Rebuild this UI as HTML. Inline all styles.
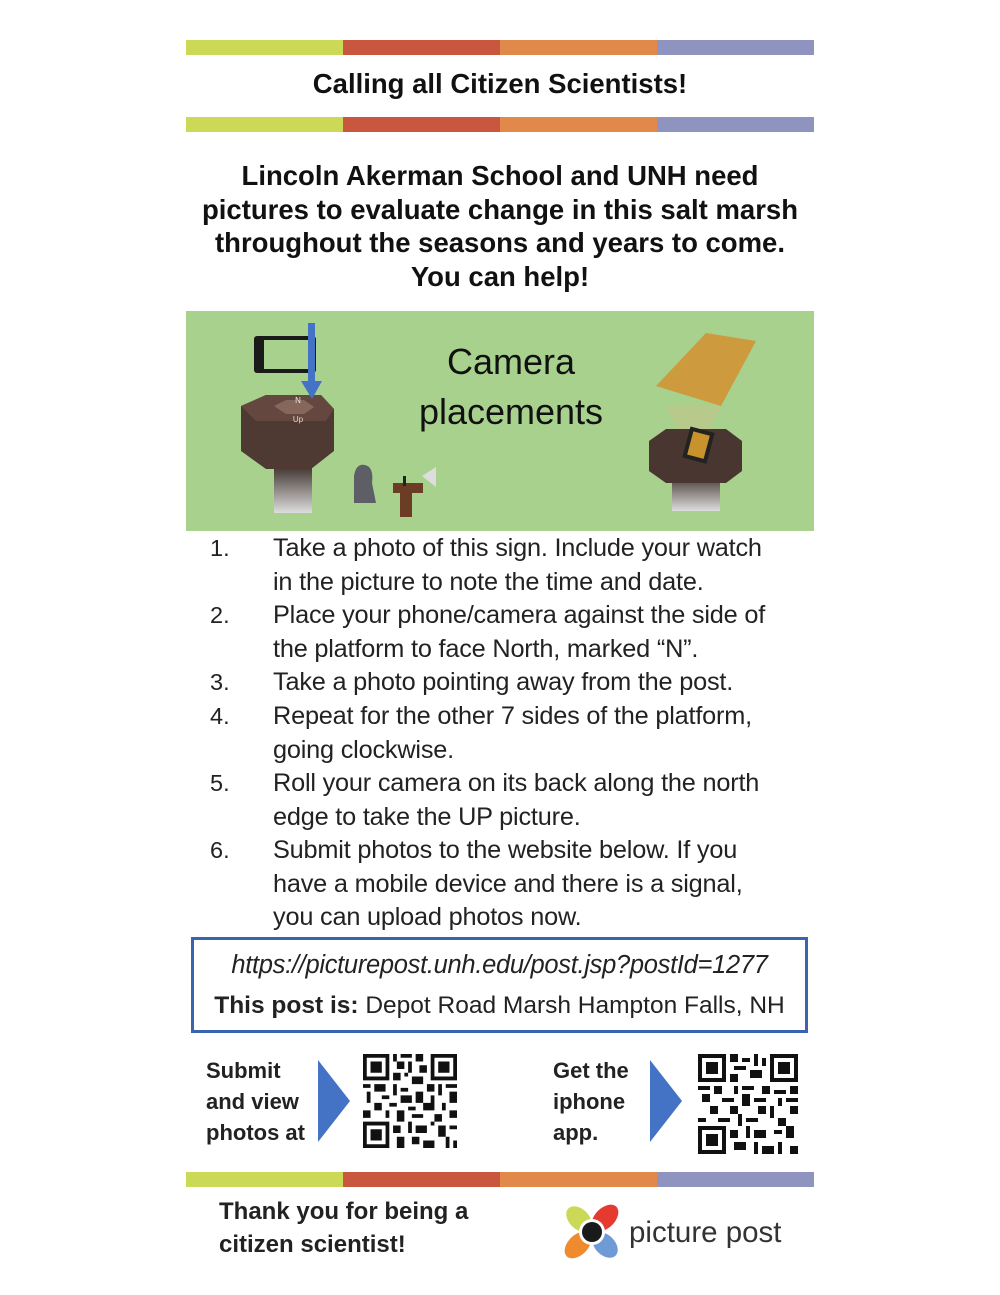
<!DOCTYPE html>
<html><head><meta charset="utf-8"><style>
body{margin:0;background:#fff;width:1000px;height:1295px;position:relative;font-family:"Liberation Sans",sans-serif;color:#111;overflow:hidden}
.stripe{position:absolute;left:186px;width:628px;height:15px;display:flex}
.stripe div{flex:1}
.a{background:#ccd957}.b{background:#c9573f}.c{background:#e0894a}.d{background:#8e93bf}
.abs{position:absolute}
.li{position:absolute;left:210px;font-size:23.5px;line-height:33.5px;color:#222}
.li span{position:absolute;left:63px;white-space:nowrap;font-size:25.3px;letter-spacing:-0.2px}
</style></head><body>
<div class="stripe" style="top:40px"><div class="a"></div><div class="b"></div><div class="c"></div><div class="d"></div></div>
<div class="abs" style="top:68px;left:0;width:1000px;text-align:center;font-weight:bold;font-size:27.5px">Calling all Citizen Scientists!</div>
<div class="stripe" style="top:117px"><div class="a"></div><div class="b"></div><div class="c"></div><div class="d"></div></div>
<div class="abs" style="top:159px;left:0;width:1000px;text-align:center;font-weight:bold;font-size:27.5px;line-height:33.5px">Lincoln Akerman School and UNH need<br>pictures to evaluate change in this salt marsh<br>throughout the seasons and years to come.<br>You can help!</div>

<div class="abs" style="left:186px;top:311px;width:628px;height:220px;background:#a8d18e;overflow:hidden">
<svg width="628" height="220" viewBox="0 0 628 220">
<defs><linearGradient id="g1" x1="0" y1="0" x2="0" y2="1"><stop offset="0" stop-color="#2e211c"/><stop offset="1" stop-color="#ddd"/></linearGradient></defs>
<rect x="88" y="150" width="38" height="52" fill="url(#g1)"/>
<polygon points="55,95 80,84 135,84 148,98 148,140 125,158 80,158 55,140" fill="#4f3a33"/>
<polygon points="55,95 80,84 135,84 148,98 140,110 70,110" fill="#64483f"/>
<polygon points="88,95 100,89 118,89 128,96 118,103 100,103" fill="#86675c"/>
<text x="112" y="111" font-size="8" fill="#ddd" text-anchor="middle">Up</text>
<text x="112" y="92" font-size="8" fill="#eee" text-anchor="middle">N</text>
<rect x="68" y="25" width="62" height="37" rx="3" fill="#1a1a1a"/><rect x="78" y="29" width="48" height="29" fill="#a8d18e"/>
<rect x="122" y="12" width="7" height="60" fill="#4472c4"/><polygon points="115,70 136,70 126,88" fill="#4472c4"/>
<path d="M168,192 L168,165 Q170,152 179,154 Q188,156 186,172 L190,192 Z" fill="#5e5e66"/>
<rect x="207" y="172" width="30" height="10" fill="#6b3d24"/><rect x="214" y="180" width="12" height="26" fill="#6b3d24"/>
<rect x="217" y="165" width="3" height="10" fill="#222"/>
<polygon points="236,165 250,156 250,176" fill="#ddd"/>
<polygon points="470,75 520,22 570,30 535,95" fill="#cd9a3d"/>
<polygon points="480,95 535,95 520,125 495,125" fill="#bfc78a" opacity=".7"/>
<rect x="486" y="160" width="48" height="40" fill="url(#g1)"/>
<polygon points="463,130 480,118 540,118 556,130 556,160 540,172 480,172 463,160" fill="#4a3630"/>
<rect x="500" y="118" width="25" height="32" fill="#222" transform="rotate(15 512 134)"/><rect x="504" y="122" width="17" height="24" fill="#c8922c" transform="rotate(15 512 134)"/>
</svg>
<div class="abs" style="left:210px;top:26px;width:230px;text-align:center;font-size:36px;line-height:50px;color:#111">Camera<br>placements</div>
</div>

<div class="li" style="top:532px">1.<span>Take a photo of this sign. Include your watch<br>in the picture to note the time and date.</span></div>
<div class="li" style="top:599px">2.<span>Place your phone/camera against the side of<br>the platform to face North, marked “N”.</span></div>
<div class="li" style="top:666px">3.<span>Take a photo pointing away from the post.</span></div>
<div class="li" style="top:700px">4.<span>Repeat for the other 7 sides of the platform,<br>going clockwise.</span></div>
<div class="li" style="top:767px">5.<span>Roll your camera on its back along the north<br>edge to take the UP picture.</span></div>
<div class="li" style="top:834px">6.<span>Submit photos to the website below. If you<br>have a mobile device and there is a signal,<br>you can upload photos now.</span></div>

<div class="abs" style="left:191px;top:937px;width:611px;height:90px;border:3px solid #3a63b0;text-align:center;color:#222">
<div style="margin-top:11px;font-style:italic;font-size:25.5px;letter-spacing:-0.3px">https://picturepost.unh.edu/post.jsp?postId=1277</div>
<div style="margin-top:12px;font-size:24.5px"><b>This post is:</b> Depot Road Marsh Hampton Falls, NH</div></div>

<div class="abs" style="left:206px;top:1055px;font-size:22px;line-height:31px;font-weight:bold;color:#222">Submit<br>and view<br>photos at</div>
<svg class="abs" style="left:316px;top:1060px" width="36" height="82"><polygon points="2,0 34,41 2,82" fill="#4472c4"/></svg>
<div class="abs" style="left:553px;top:1055px;font-size:22px;line-height:31px;font-weight:bold;color:#222">Get the<br>iphone<br>app.</div>
<svg class="abs" style="left:648px;top:1060px" width="36" height="82"><polygon points="2,0 34,41 2,82" fill="#4472c4"/></svg>

<svg class="abs" style="left:362px;top:1054px" width="96" height="94" viewBox="0 0 25 25">
<g fill="#111"><path d="M0 0h7v7H0zM1 1v5h5V1zM2 2h3v3H2zM18 0h7v7h-7zM19 1v5h5V1zM20 2h3v3h-3zM0 18h7v7H0zM1 19v5h5v-5zM2 20h3v3H2z" fill-rule="evenodd"/>
<path d="M8 0h1v2H8zM10 0h3v1h-3zM14 0h2v2h-2zM9 2h2v2H9zM12 2h1v3h-1zM15 3h2v2h-2zM8 5h2v2H8zM11 5h1v1h-1zM13 6h3v2h-3zM0 8h2v1H0zM3 8h3v2H3zM8 8h1v3H8zM10 9h2v1h-2zM17 8h2v2h-2zM20 8h1v3h-1zM22 8h3v1h-3zM1 10h1v3H1zM5 11h2v1H5zM10 11h3v2h-3zM14 10h2v3h-2zM18 11h1v2h-1zM23 10h2v3h-2zM3 13h2v2H3zM7 13h2v1H7zM12 14h2v1h-2zM16 13h3v2h-3zM21 13h1v2h-1zM0 15h2v2H0zM6 15h1v2H6zM9 15h2v3H9zM13 16h3v1h-3zM19 16h2v2h-2zM23 15h2v2h-2zM8 19h2v2H8zM12 18h1v3h-1zM14 19h3v2h-3zM18 18h1v1h-1zM20 19h2v3h-2zM23 19h2v1h-2zM9 22h2v3H9zM13 22h2v2h-2zM16 23h3v2h-3zM22 22h1v3h-1zM24 23h1v2h-1z"/></g></svg>
<svg class="abs" style="left:697px;top:1054px" width="102" height="100" viewBox="0 0 25 25">
<g fill="#111"><path d="M0 0h7v7H0zM1 1v5h5V1zM2 2h3v3H2zM18 0h7v7h-7zM19 1v5h5V1zM20 2h3v3h-3zM0 18h7v7H0zM1 19v5h5v-5zM2 20h3v3H2z" fill-rule="evenodd"/>
<path d="M8 0h2v2H8zM11 1h2v1h-2zM14 0h1v3h-1zM16 1h1v2h-1zM9 3h3v1H9zM13 4h3v2h-3zM8 5h2v2H8zM0 8h3v1H0zM4 8h2v2H4zM9 8h1v2H9zM11 8h3v1h-3zM16 8h2v2h-2zM19 9h3v1h-3zM23 8h2v2h-2zM1 10h2v2H1zM6 11h3v1H6zM11 10h2v3h-2zM14 11h3v1h-3zM20 11h1v2h-1zM22 11h3v1h-3zM3 13h2v2H3zM8 13h2v2H8zM15 13h2v2h-2zM18 13h1v3h-1zM23 13h2v2h-2zM0 16h2v1H0zM5 16h3v1H5zM10 15h1v3h-1zM12 16h3v1h-3zM20 16h2v2h-2zM8 19h2v2H8zM12 18h1v3h-1zM14 19h3v2h-3zM19 19h2v1h-2zM22 18h2v3h-2zM9 22h3v2H9zM14 22h1v3h-1zM16 23h3v2h-3zM20 22h1v3h-1zM23 23h2v2h-2z"/></g></svg>

<div class="stripe" style="top:1172px"><div class="a"></div><div class="b"></div><div class="c"></div><div class="d"></div></div>
<div class="abs" style="left:219px;top:1195px;font-size:24px;line-height:33px;font-weight:bold;color:#222">Thank you for being a<br>citizen scientist!</div>
<svg class="abs" style="left:564px;top:1204px" width="56" height="56" viewBox="0 0 56 56">
<ellipse cx="15" cy="15" rx="15" ry="10" transform="rotate(45 15 15)" fill="#ccd957"/>
<ellipse cx="41" cy="14" rx="16" ry="10" transform="rotate(-45 41 14)" fill="#e53a2f"/>
<ellipse cx="14" cy="41" rx="16" ry="10" transform="rotate(-45 14 41)" fill="#f08a2e"/>
<ellipse cx="41" cy="41" rx="15" ry="10" transform="rotate(45 41 41)" fill="#6e9bd4"/>
<circle cx="28" cy="28" r="13" fill="#fff"/><circle cx="28" cy="28" r="10" fill="#1a1a1a"/>
</svg>
<div class="abs" style="left:629px;top:1216px;font-size:29.5px;color:#333">picture post</div>
</body></html>
